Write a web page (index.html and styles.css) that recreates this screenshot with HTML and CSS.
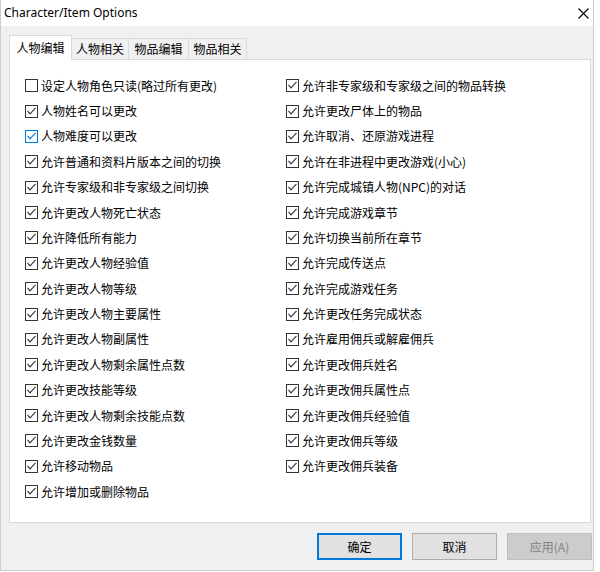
FILE: index.html
```html
<!DOCTYPE html>
<html lang="zh-CN">
<head>
<meta charset="utf-8">
<title>Character/Item Options</title>
<link rel="stylesheet" href="styles.css">
</head>
<body>
<div class="window">
  <div class="titlebar">
    <span class="title">Character/Item Options</span>
    <svg class="close" width="11" height="11" viewBox="0 0 11 11"><path d="M0.5 0.5 L10.5 10.5 M10.5 0.5 L0.5 10.5" stroke="#000" stroke-width="1.1" fill="none"/></svg>
  </div>
  <div class="content">
    <div class="tabs">
      <div class="tab active">人物编辑</div>
      <div class="tab t2">人物相关</div>
      <div class="tab t3">物品编辑</div>
      <div class="tab t4">物品相关</div>
    </div>
    <div class="panel">
      <div class="col">
        <div class="item"><span class="box"></span><span class="lbl">设定人物角色只读(略过所有更改)</span></div>
        <div class="item"><span class="box"><svg viewBox="0 0 11 11"><polyline points="1.5,4.8 4,7.8 9.5,1.8"/></svg></span><span class="lbl">人物姓名可以更改</span></div>
        <div class="item hot"><span class="box"><svg viewBox="0 0 11 11"><polyline points="1.5,4.8 4,7.8 9.5,1.8"/></svg></span><span class="lbl">人物难度可以更改</span></div>
        <div class="item"><span class="box"><svg viewBox="0 0 11 11"><polyline points="1.5,4.8 4,7.8 9.5,1.8"/></svg></span><span class="lbl">允许普通和资料片版本之间的切换</span></div>
        <div class="item"><span class="box"><svg viewBox="0 0 11 11"><polyline points="1.5,4.8 4,7.8 9.5,1.8"/></svg></span><span class="lbl">允许专家级和非专家级之间切换</span></div>
        <div class="item"><span class="box"><svg viewBox="0 0 11 11"><polyline points="1.5,4.8 4,7.8 9.5,1.8"/></svg></span><span class="lbl">允许更改人物死亡状态</span></div>
        <div class="item"><span class="box"><svg viewBox="0 0 11 11"><polyline points="1.5,4.8 4,7.8 9.5,1.8"/></svg></span><span class="lbl">允许降低所有能力</span></div>
        <div class="item"><span class="box"><svg viewBox="0 0 11 11"><polyline points="1.5,4.8 4,7.8 9.5,1.8"/></svg></span><span class="lbl">允许更改人物经验值</span></div>
        <div class="item"><span class="box"><svg viewBox="0 0 11 11"><polyline points="1.5,4.8 4,7.8 9.5,1.8"/></svg></span><span class="lbl">允许更改人物等级</span></div>
        <div class="item"><span class="box"><svg viewBox="0 0 11 11"><polyline points="1.5,4.8 4,7.8 9.5,1.8"/></svg></span><span class="lbl">允许更改人物主要属性</span></div>
        <div class="item"><span class="box"><svg viewBox="0 0 11 11"><polyline points="1.5,4.8 4,7.8 9.5,1.8"/></svg></span><span class="lbl">允许更改人物副属性</span></div>
        <div class="item"><span class="box"><svg viewBox="0 0 11 11"><polyline points="1.5,4.8 4,7.8 9.5,1.8"/></svg></span><span class="lbl">允许更改人物剩余属性点数</span></div>
        <div class="item"><span class="box"><svg viewBox="0 0 11 11"><polyline points="1.5,4.8 4,7.8 9.5,1.8"/></svg></span><span class="lbl">允许更改技能等级</span></div>
        <div class="item"><span class="box"><svg viewBox="0 0 11 11"><polyline points="1.5,4.8 4,7.8 9.5,1.8"/></svg></span><span class="lbl">允许更改人物剩余技能点数</span></div>
        <div class="item"><span class="box"><svg viewBox="0 0 11 11"><polyline points="1.5,4.8 4,7.8 9.5,1.8"/></svg></span><span class="lbl">允许更改金钱数量</span></div>
        <div class="item"><span class="box"><svg viewBox="0 0 11 11"><polyline points="1.5,4.8 4,7.8 9.5,1.8"/></svg></span><span class="lbl">允许移动物品</span></div>
        <div class="item"><span class="box"><svg viewBox="0 0 11 11"><polyline points="1.5,4.8 4,7.8 9.5,1.8"/></svg></span><span class="lbl">允许增加或删除物品</span></div>
      </div>
      <div class="col">
        <div class="item"><span class="box"><svg viewBox="0 0 11 11"><polyline points="1.5,4.8 4,7.8 9.5,1.8"/></svg></span><span class="lbl">允许非专家级和专家级之间的物品转换</span></div>
        <div class="item"><span class="box"><svg viewBox="0 0 11 11"><polyline points="1.5,4.8 4,7.8 9.5,1.8"/></svg></span><span class="lbl">允许更改尸体上的物品</span></div>
        <div class="item"><span class="box"><svg viewBox="0 0 11 11"><polyline points="1.5,4.8 4,7.8 9.5,1.8"/></svg></span><span class="lbl">允许取消、还原游戏进程</span></div>
        <div class="item"><span class="box"><svg viewBox="0 0 11 11"><polyline points="1.5,4.8 4,7.8 9.5,1.8"/></svg></span><span class="lbl">允许在非进程中更改游戏(小心)</span></div>
        <div class="item"><span class="box"><svg viewBox="0 0 11 11"><polyline points="1.5,4.8 4,7.8 9.5,1.8"/></svg></span><span class="lbl">允许完成城镇人物(NPC)的对话</span></div>
        <div class="item"><span class="box"><svg viewBox="0 0 11 11"><polyline points="1.5,4.8 4,7.8 9.5,1.8"/></svg></span><span class="lbl">允许完成游戏章节</span></div>
        <div class="item"><span class="box"><svg viewBox="0 0 11 11"><polyline points="1.5,4.8 4,7.8 9.5,1.8"/></svg></span><span class="lbl">允许切换当前所在章节</span></div>
        <div class="item"><span class="box"><svg viewBox="0 0 11 11"><polyline points="1.5,4.8 4,7.8 9.5,1.8"/></svg></span><span class="lbl">允许完成传送点</span></div>
        <div class="item"><span class="box"><svg viewBox="0 0 11 11"><polyline points="1.5,4.8 4,7.8 9.5,1.8"/></svg></span><span class="lbl">允许完成游戏任务</span></div>
        <div class="item"><span class="box"><svg viewBox="0 0 11 11"><polyline points="1.5,4.8 4,7.8 9.5,1.8"/></svg></span><span class="lbl">允许更改任务完成状态</span></div>
        <div class="item"><span class="box"><svg viewBox="0 0 11 11"><polyline points="1.5,4.8 4,7.8 9.5,1.8"/></svg></span><span class="lbl">允许雇用佣兵或解雇佣兵</span></div>
        <div class="item"><span class="box"><svg viewBox="0 0 11 11"><polyline points="1.5,4.8 4,7.8 9.5,1.8"/></svg></span><span class="lbl">允许更改佣兵姓名</span></div>
        <div class="item"><span class="box"><svg viewBox="0 0 11 11"><polyline points="1.5,4.8 4,7.8 9.5,1.8"/></svg></span><span class="lbl">允许更改佣兵属性点</span></div>
        <div class="item"><span class="box"><svg viewBox="0 0 11 11"><polyline points="1.5,4.8 4,7.8 9.5,1.8"/></svg></span><span class="lbl">允许更改佣兵经验值</span></div>
        <div class="item"><span class="box"><svg viewBox="0 0 11 11"><polyline points="1.5,4.8 4,7.8 9.5,1.8"/></svg></span><span class="lbl">允许更改佣兵等级</span></div>
        <div class="item"><span class="box"><svg viewBox="0 0 11 11"><polyline points="1.5,4.8 4,7.8 9.5,1.8"/></svg></span><span class="lbl">允许更改佣兵装备</span></div>
      </div>
    </div>
    <div class="buttons">
      <div class="btn default">确定</div>
      <div class="btn">取消</div>
      <div class="btn disabled">应用(A)</div>
    </div>
  </div>
</div>
</body>
</html>
```
FILE: styles.css
```css
html, body {
  margin: 0;
  padding: 0;
  background: #ffffff;
}
body {
  width: 600px;
  height: 572px;
  font-family: "Noto Sans CJK SC", "Microsoft YaHei", sans-serif;
  font-size: 12px;
  color: #000;
}
.window {
  width: 594px;
  height: 571px;
  box-sizing: border-box;
  border: 1px solid #cdcdcd;
  border-top: none;
  background: #f0f0f0;
  display: flex;
  flex-direction: column;
}
.titlebar {
  height: 26px;
  flex: none;
  background: #ffffff;
  display: flex;
  align-items: center;
  justify-content: space-between;
  padding-left: 3px;
  padding-right: 4px;
}
.title {
  font-family: "Noto Sans", "Open Sans", sans-serif;
  font-size: 12px;
  line-height: 16px;
  color: #000;
}
.close {
  width: 11px;
  height: 11px;
  margin-top: 1px;
}
.content {
  flex: 1;
  padding: 9px 0 0 8px;
}
.tabs {
  display: flex;
  align-items: flex-end;
  height: 24px;
}
.tab {
  height: 21px;
  box-sizing: border-box;
  border: 1px solid #d9d9d9;
  border-bottom: none;
  background: #f0f0f0;
  display: flex;
  align-items: center;
  justify-content: center;
  line-height: 14px;
  margin-left: -1px;
}
.tab.active {
  height: 25px;
  width: 63px;
  margin-left: 0;
  margin-bottom: -1px;
  background: #ffffff;
  position: relative;
  z-index: 1;
  padding-bottom: 1px;
}
.tab.t2 { width: 57px; margin-left: 0; border-left: none; }
.tab.t3 { width: 61px; }
.tab.t4 { width: 59px; }
.panel {
  width: 582px;
  height: 464px;
  box-sizing: border-box;
  border: 1px solid #d9d9d9;
  background: #ffffff;
  display: grid;
  grid-template-columns: 261px 1fr;
  align-content: start;
  padding: 13px 0 0 15px;
}
.col {
  display: flex;
  flex-direction: column;
}
.item {
  height: 25.375px;
  display: flex;
  align-items: center;
}
.box {
  width: 13px;
  height: 13px;
  box-sizing: border-box;
  border: 1px solid #333333;
  background: #ffffff;
  flex: none;
  display: flex;
}
.box svg {
  width: 11px;
  height: 11px;
}
.box polyline {
  fill: none;
  stroke: #333333;
  stroke-width: 1.1;
}
.item.hot .box {
  border-color: #0078d7;
}
.item.hot .box polyline {
  stroke: #0078d7;
}
.lbl {
  margin-left: 3px;
  line-height: 16px;
  white-space: nowrap;
}
.buttons {
  display: flex;
  justify-content: flex-end;
  gap: 10px;
  margin-top: 10px;
  padding-right: 1px;
}
.btn {
  width: 85px;
  height: 27px;
  box-sizing: border-box;
  border: 1px solid #adadad;
  background: #e1e1e1;
  display: flex;
  align-items: center;
  justify-content: center;
  line-height: 14px;
}
.btn.default {
  border: 2px solid #0078d7;
}
.btn.disabled {
  background: #cccccc;
  border-color: #bfbfbf;
  color: #838383;
}
```
